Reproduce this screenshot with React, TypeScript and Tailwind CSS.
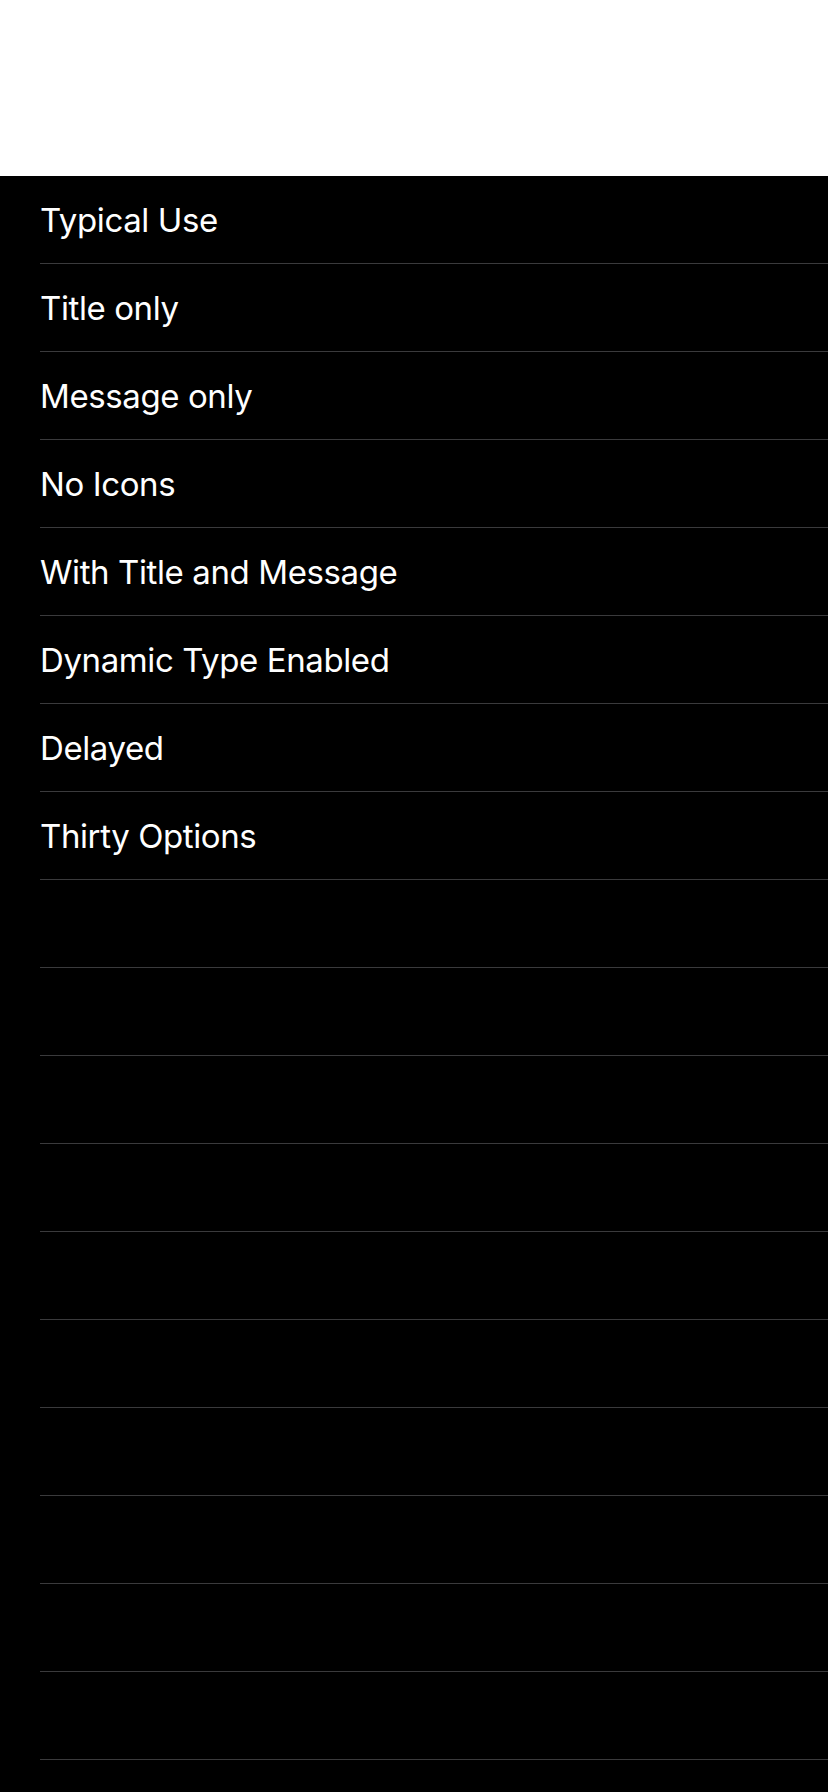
import React from "react";

const items = [
  "Typical Use",
  "Title only",
  "Message only",
  "No Icons",
  "With Title and Message",
  "Dynamic Type Enabled",
  "Delayed",
  "Thirty Options",
];

export default function App() {
  const rows = Array.from({ length: 19 }, (_, i) => items[i] ?? "");
  return (
    <div
      className="h-[1792px] w-[828px] overflow-hidden bg-black"
      style={{ fontFamily: "Inter, 'Noto Sans', sans-serif" }}
    >
      <div className="h-[176px] bg-white" />
      <div className="flex flex-col">
        {rows.map((t, i) => (
          <div key={i} className="flex flex-col">
            <div className="flex h-[87px] items-center pl-[40px] pt-[2px] text-[33px] leading-none tracking-[-0.4px] text-white">
              {t}
            </div>
            <div className="ml-[40px] h-px bg-[#3a3a3c]" />
          </div>
        ))}
      </div>
    </div>
  );
}
